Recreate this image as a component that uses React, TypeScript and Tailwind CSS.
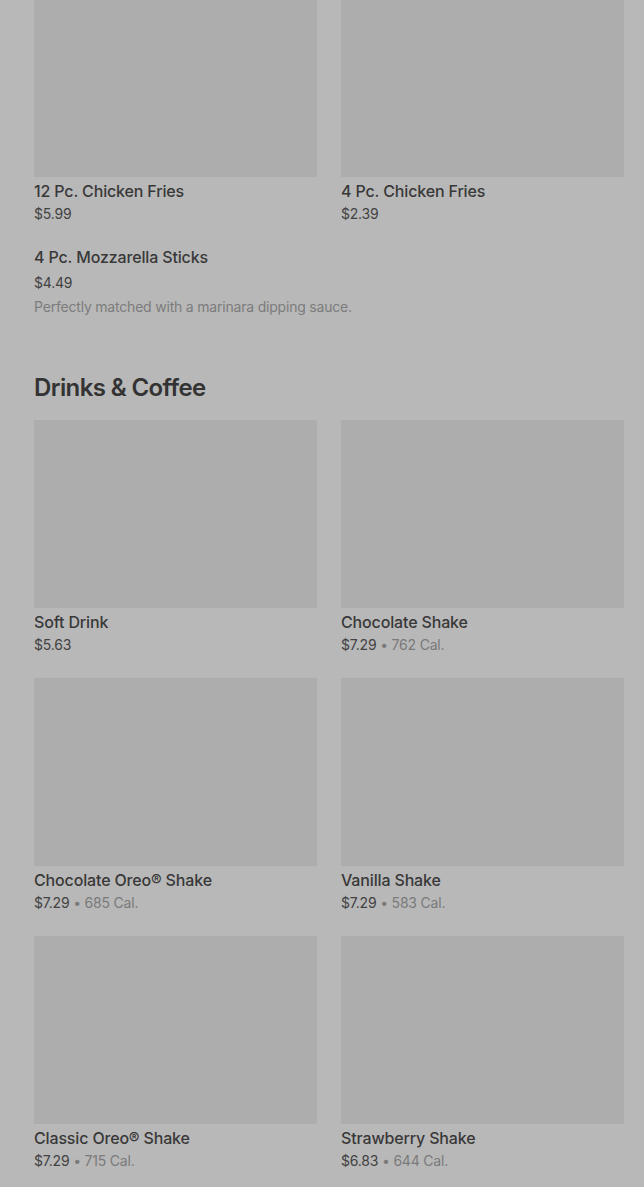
import React from "react";

type Item = { name: string; price: string; cal?: string };

const drinks: Item[] = [
  { name: "Soft Drink", price: "$5.63" },
  { name: "Chocolate Shake", price: "$7.29", cal: "762 Cal." },
  { name: "Chocolate Oreo® Shake", price: "$7.29", cal: "685 Cal." },
  { name: "Vanilla Shake", price: "$7.29", cal: "583 Cal." },
  { name: "Classic Oreo® Shake", price: "$7.29", cal: "715 Cal." },
  { name: "Strawberry Shake", price: "$6.83", cal: "644 Cal." },
];

function Card({ item }: { item: Item }) {
  return (
    <div className="flex flex-col">
      <div className="h-[188px] bg-[#adadad]" />
      <div className="pt-[2px] text-[16px] leading-6 font-medium tracking-[-0.15px] text-[#383838]">{item.name}</div>
      <div className="mt-[1px] text-[14px] leading-5 tracking-[-0.2px] text-[#424242]">
        {item.price}
        {item.cal && (
          <span className="text-[#7a7a7a]"> • {item.cal}</span>
        )}
      </div>
    </div>
  );
}

export default function App() {
  return (
    <div
      className="min-h-[1187px] bg-[#b8b8b8] pl-[34px] pr-[20px] overflow-hidden"
      style={{ fontFamily: "Inter, 'Noto Sans', sans-serif" }}
    >
      <div className="-mt-[11px] grid grid-cols-2 gap-x-[24px]">
        <Card item={{ name: "12 Pc. Chicken Fries", price: "$5.99" }} />
        <Card item={{ name: "4 Pc. Chicken Fries", price: "$2.39" }} />
      </div>
      <div className="mt-[21px] flex flex-col">
        <div className="text-[16px] leading-6 font-medium tracking-[-0.15px] text-[#383838]">4 Pc. Mozzarella Sticks</div>
        <div className="mt-[4px] text-[14px] leading-5 tracking-[-0.2px] text-[#424242]">$4.49</div>
        <div className="mt-[4px] text-[14px] leading-5 tracking-[-0.2px] text-[#7c7c7c]">
          Perfectly matched with a marinara dipping sauce.
        </div>
      </div>
      <h2 className="mt-[55px] text-[24px] leading-8 font-semibold text-[#333333] tracking-[-0.6px]">
        Drinks &amp; Coffee
      </h2>
      <div className="mt-[16px] grid grid-cols-2 gap-x-[24px] gap-y-[23px] pb-[17px]">
        {drinks.map((d) => (
          <Card key={d.name} item={d} />
        ))}
      </div>
    </div>
  );
}
